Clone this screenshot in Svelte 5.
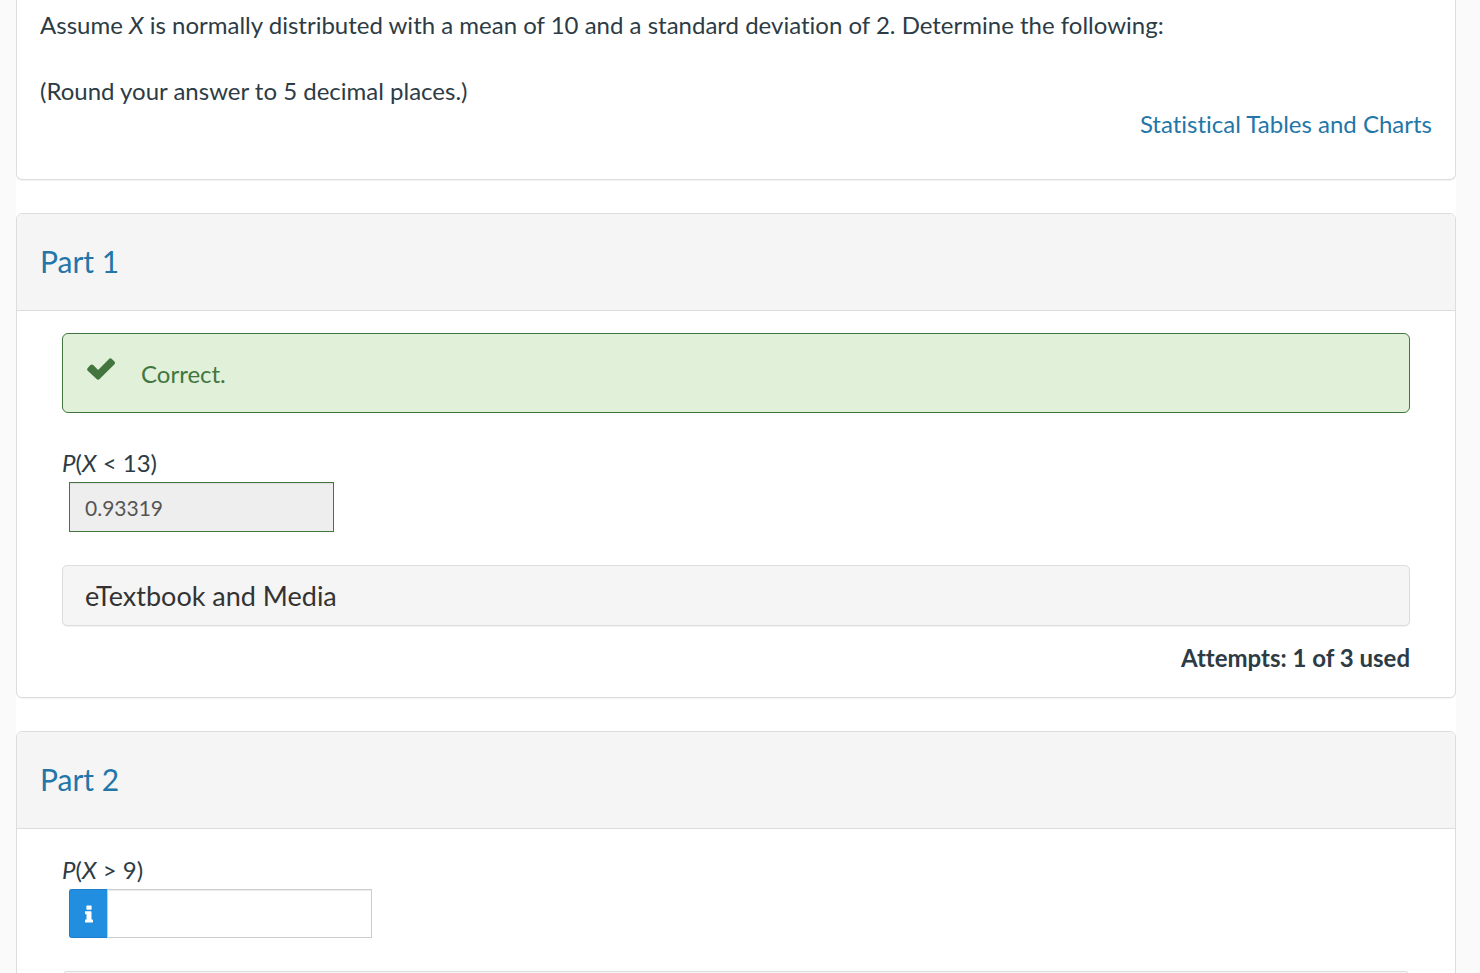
<script>
  // Question parts shown below the prompt
  const parts = [
    { id: 1, op: '<', bound: '13', answer: '0.93319', correct: true, attempts: 'Attempts: 1 of 3 used' },
    { id: 2, op: '>', bound: '9', answer: '', correct: false, attempts: '' }
  ]
</script>

<div class="page">
  <main class="question">
    <section class="card prompt">
      <p>Assume <em>X</em> is normally distributed with a mean of 10 and a standard deviation of 2. Determine the following:</p>
      <p>(Round your answer to 5 decimal places.)</p>
      <a class="tables-link" href="#tables">Statistical Tables and Charts</a>
    </section>

    {#each parts as part (part.id)}
      <section class="card">
        <header class="card-header">
          <h2>Part {part.id}</h2>
        </header>

        <div class="card-body">
          {#if part.correct}
            <div class="alert" role="status">
              <svg class="check" viewBox="0 0 28 22" aria-hidden="true">
                <path d="M27.5 6.2 12.6 21.1q-.6.6-1.5.6t-1.5-.6L.7 12.7q-.6-.6-.6-1.4t.6-1.4l2.7-2.8q.6-.6 1.4-.6t1.4.6l4.9 4.9L22 .9q.6-.6 1.4-.6t1.4.6l2.7 2.6q.5.6.5 1.4t-.5 1.3z" />
              </svg>
              <span>Correct.</span>
            </div>
          {/if}

          <label class="answer-label" for="answer-{part.id}"><em>P</em>(<em>X</em> {part.op} {part.bound})</label>
          <div class="answer">
            {#if !part.correct}
              <button class="info" type="button" aria-label="Answer information">
                <svg viewBox="0 0 8 18" aria-hidden="true">
                  <path d="M2 .5h4q.6 0 .6.6v3q0 .6-.6.6H2q-.6 0-.6-.6v-3q0-.6.6-.6zM.6 6.2h5.300q.6 0 .6.6v7.700h.9q.6 0 .6.6v1.800q0 .6-.6.6H.6q-.6 0-.6-.6v-1.800q0-.6.6-.6h.9V9.200H.6Q0 9.200 0 8.600V6.800q0-.6.6-.6z" />
                </svg>
              </button>
            {/if}
            <input
              id="answer-{part.id}"
              class:correct={part.correct}
              type="text"
              value={part.answer}
              disabled={part.correct}
            />
          </div>

          <button class="media" type="button">eTextbook and Media</button>
          {#if part.attempts}
            <p class="attempts">{part.attempts}</p>
          {/if}
        </div>
      </section>
    {/each}
  </main>
</div>

<style>
  :global(body) {
    margin: 0;
    background: #fafafa;
  }

  .page {
    box-sizing: border-box;
    height: 100vh;
    overflow: hidden;
    padding: 0 24px 0 16px;
    font-family: Lato, 'Liberation Sans', sans-serif;
    font-size: 24px;
    font-variant-ligatures: none;
    line-height: 33px;
    color: #2d3b45;
  }

  .question {
    display: flex;
    flex-direction: column;
    gap: 33px;
    background: #fff;
  }

  .card {
    border: 1px solid #ddd;
    border-radius: 6px;
    background: #fff;
    box-shadow: 0 1px 1px rgba(0, 0, 0, 0.05);
  }

  .prompt {
    display: flex;
    flex-direction: column;
    padding: 8px 23px 39px;
    border-top: 0;
    border-radius: 0 0 6px 6px;
  }

  .prompt p {
    margin: 0;
  }

  .prompt p + p {
    margin-top: 33px;
  }

  .tables-link {
    align-self: flex-end;
    color: #2376a8;
    text-decoration: none;
  }

  .card-header {
    padding: 31px 23px 33px;
    border-bottom: 1px solid #ddd;
    border-radius: 5px 5px 0 0;
    background: #f5f5f5;
  }

  h2 {
    margin: 0;
    font-size: 30px;
    font-weight: 400;
    line-height: 32px;
    color: #2376a8;
  }

  .card-body {
    display: flex;
    flex-direction: column;
    padding: 22px 45px 23px;
  }

  .alert {
    display: flex;
    align-items: center;
    gap: 26px;
    margin-bottom: 31px;
    padding: 23px 24px 22px;
    border: 1px solid #43763f;
    border-radius: 6px;
    background: #e0f0d9;
    color: #43763f;
  }

  .check {
    width: 28px;
    height: 22px;
    margin-bottom: 10px;
    fill: currentColor;
  }

  .answer-label {
    align-self: flex-start;
    margin-top: 2px;
  }

  .answer {
    display: flex;
    margin: 3px 7px 33px;
  }

  input {
    box-sizing: border-box;
    width: 265px;
    height: 49px;
    padding: 0 15px;
    border: 1px solid #ccc;
    border-radius: 0;
    background: #fff;
    box-shadow: inset 0 1px 1px rgba(0, 0, 0, 0.075);
    font: inherit;
    font-size: 21px;
    color: #555;
  }

  input.correct {
    height: 50px;
    border-color: #43763f;
    background: #eee;
  }

  .info {
    display: flex;
    align-items: center;
    justify-content: center;
    width: 38px;
    padding: 0;
    border: 1px solid #1f7fcb;
    border-right: 0;
    border-radius: 3px 0 0 3px;
    background: #218ee0;
  }

  .info svg {
    width: 8px;
    height: 18px;
    fill: #fff;
  }

  .media {
    padding: 13px 22px;
    border: 1px solid #ddd;
    border-radius: 5px;
    background: #f5f5f5;
    box-shadow: 0 1px 1px rgba(0, 0, 0, 0.05);
    font: inherit;
    font-size: 27px;
    font-variant-ligatures: none;
    line-height: 33px;
    text-align: left;
    color: #333;
  }

  .attempts {
    margin: 15px 0 0;
    font-weight: 700;
    text-align: right;
  }
</style>
